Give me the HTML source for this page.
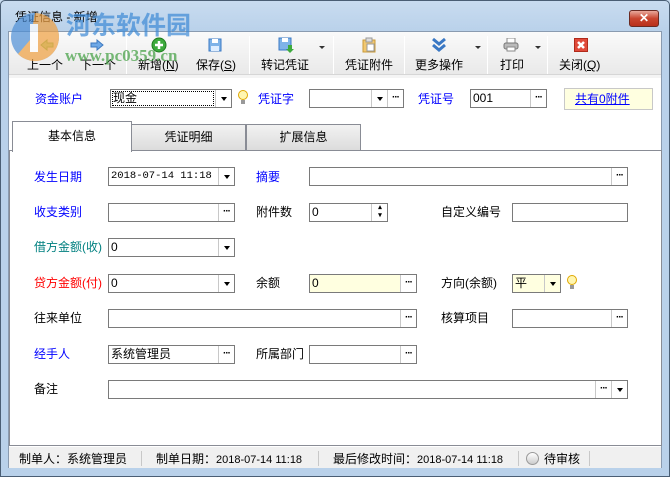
<!DOCTYPE html>
<html><head><meta charset="utf-8"><style>
*{margin:0;padding:0;box-sizing:border-box}
body{width:670px;height:477px;overflow:hidden;position:relative;background:#b9d1ea;font-family:"Liberation Sans","Noto Sans CJK SC","WenQuanYi Zen Hei",sans-serif;font-size:12px;color:#000}
.a{position:absolute}
.t{position:absolute;white-space:nowrap;line-height:14px}
.blue{color:#0000ff}
.box{position:absolute;height:19px;border:1px solid #7a7a7a;background:#fff;font-size:12px;line-height:17px;padding-left:2px;white-space:nowrap}
.btn{position:absolute;top:0;bottom:0;width:16px;border-left:1px solid #c8c8c8;background:#fff;text-align:center;font-size:10px;line-height:15px;font-weight:bold;letter-spacing:-1px}
.arr{position:absolute;top:0;bottom:0;width:16px;border-left:1px solid #c8c8c8;background:#fff}
.arr:after{content:"";position:absolute;left:5px;top:7px;border-left:3px solid transparent;border-right:3px solid transparent;border-top:4px solid #000}
.tb{position:absolute;top:56px;font-size:12px;white-space:nowrap;color:#000}
.sep{position:absolute;top:36px;width:1px;height:38px;background:#cfcfcf;border-right:1px solid #fff}
.dd{position:absolute;top:46px;border-left:3px solid transparent;border-right:3px solid transparent;border-top:3px solid #333}
</style></head><body>
<div class="a" style="left:0;top:0;width:670px;height:32px;background:linear-gradient(#c9dcf0,#b9d1ea)"></div>
<div class="a" style="left:0;top:0;width:670px;height:477px;border:1px solid #4a5e74;border-radius:5px 5px 0 0"></div>
<div class="t" style="left:15px;top:10px;font-size:12px">凭证信息 - 新增</div>
<div class="a" style="left:629px;top:10px;width:30px;height:17px;border:1px solid #6b2a22;border-radius:3px;background:linear-gradient(#e9a99c,#c9452f 50%,#b9301c);color:#fff;font-weight:bold;text-align:center;line-height:15px;font-size:12px">✕</div>
<div class="a" style="left:8px;top:31px;width:654px;height:437px;background:#fff;border:1px solid #8a9bb0"></div>
<div class="a" style="left:9px;top:32px;width:652px;height:43px;background:linear-gradient(#fafafa,#e9e9e9);border-bottom:1px solid #d6d6d6"></div>
<div class="a" style="left:9px;top:75px;width:652px;height:3px;background:#f4f4f4"></div>
<div class="tb" style="left:27px">上一个</div>
<div class="tb" style="left:80px">下一个</div>
<div class="tb" style="left:138px">新增(<u>N</u>)</div>
<div class="tb" style="left:196px">保存(<u>S</u>)</div>
<div class="tb" style="left:261px">转记凭证</div>
<div class="tb" style="left:345px">凭证附件</div>
<div class="tb" style="left:415px">更多操作</div>
<div class="tb" style="left:500px">打印</div>
<div class="tb" style="left:559px">关闭(<u>Q</u>)</div>
<div class="sep" style="left:126px"></div><div class="sep" style="left:249px"></div><div class="sep" style="left:333px"></div><div class="sep" style="left:404px"></div><div class="sep" style="left:487px"></div><div class="sep" style="left:547px"></div>
<div class="dd" style="left:319px"></div><div class="dd" style="left:475px"></div><div class="dd" style="left:535px"></div>
<svg class="a" style="left:40px;top:39px" width="14" height="12"><path d="M1 6 L7 1 V4 H13 V8 H7 V11Z" fill="#b6e0a0" stroke="#7fbf6a"/></svg>
<svg class="a" style="left:90px;top:39px" width="14" height="12"><path d="M13 6 L7 1 V4 H1 V8 H7 V11Z" fill="#6ea8e6" stroke="#3c78c0"/></svg>
<svg class="a" style="left:151px;top:37px" width="16" height="16"><circle cx="8" cy="8" r="7" fill="#3daa3d" stroke="#1f7a1f"/><path d="M8 4V12M4 8H12" stroke="#fff" stroke-width="2.5"/></svg>
<svg class="a" style="left:208px;top:38px" width="14" height="14"><rect x="1" y="1" width="12" height="12" fill="#7fb3e8" stroke="#3a78c4"/><rect x="4" y="1" width="6" height="4" fill="#fff"/><rect x="3" y="8" width="8" height="5" fill="#dfeeff"/></svg>
<svg class="a" style="left:278px;top:37px" width="16" height="16"><rect x="1" y="1" width="12" height="12" fill="#7fb3e8" stroke="#3a78c4"/><rect x="4" y="1" width="6" height="4" fill="#fff"/><path d="M10 8V12H8L12 16L16 12H14V8Z" fill="#3daa3d"/></svg>
<svg class="a" style="left:362px;top:37px" width="14" height="16"><rect x="1" y="3" width="12" height="12" fill="#f2c870" stroke="#c99a3a"/><rect x="4" y="1" width="6" height="4" fill="#ddd" stroke="#999"/><rect x="5" y="7" width="7" height="7" fill="#fff" stroke="#999"/></svg>
<svg class="a" style="left:432px;top:37px" width="14" height="16"><path d="M1 2L7 7L13 2M1 8L7 13L13 8" stroke="#3a78c4" stroke-width="3" fill="none"/></svg>
<svg class="a" style="left:503px;top:38px" width="16" height="14"><rect x="4" y="0" width="8" height="5" fill="#fff" stroke="#888"/><rect x="1" y="5" width="14" height="6" rx="2" fill="#bbb" stroke="#777"/><rect x="4" y="9" width="8" height="4" fill="#fff" stroke="#888"/></svg>
<svg class="a" style="left:574px;top:38px" width="14" height="14"><rect x="0.5" y="0.5" width="13" height="13" fill="#e04a3a" stroke="#b02a1a"/><path d="M4 4L10 10M10 4L4 10" stroke="#fff" stroke-width="2.5"/></svg>
<!-- watermark -->
<svg class="a" style="left:8px;top:10px;opacity:.7" width="55" height="55"><circle cx="27" cy="27" r="24" fill="#4e8fd6"/><path d="M27 3A24 24 0 0 1 51 27A24 24 0 0 1 10 44L22 30Z" fill="#f0a040"/><path d="M22 14H30V42H22Z" fill="#fff"/></svg>
<div class="t" style="left:66px;top:12px;font-size:25px;line-height:28px;color:#3d8ad6;font-weight:bold;opacity:.7">河东软件园</div>
<div class="t" style="left:65px;top:47px;font-size:17px;line-height:18px;color:#4aa34a;font-weight:bold;font-family:'Liberation Serif',serif;opacity:.75">www.pc0359.cn</div>
<div class="t blue" style="left:35px;top:92px">资金账户</div>
<div class="box" style="left:110px;top:89px;width:122px">现金<div class="arr" style="right:0"></div></div>
<div class="a" style="left:112px;top:91px;width:102px;height:15px;border:1px dotted #000"></div>
<svg class="a" style="left:238px;top:89px" width="10" height="18"><circle cx="5" cy="6" r="4.5" fill="#fff6b0" stroke="#e0a800"/><rect x="3" y="11" width="4" height="4" fill="#999"/></svg>
<div class="t blue" style="left:258px;top:92px">凭证字</div>
<div class="box" style="left:309px;top:89px;width:95px"><div class="arr" style="right:16px"></div><div class="btn" style="right:0">···</div></div>
<div class="t blue" style="left:418px;top:92px">凭证号</div>
<div class="box" style="left:470px;top:89px;width:77px">001<div class="btn" style="right:0">···</div></div>
<div class="a" style="left:564px;top:88px;width:89px;height:22px;background:#ffffe0;border:1px solid #c8c8c8"></div>
<div class="t blue" style="left:575px;top:92px;text-decoration:underline">共有0附件</div>
<div class="a" style="left:9px;top:150px;width:653px;height:296px;border:1px solid #898c95;background:#fff"></div>
<div class="a" style="left:131px;top:124px;width:115px;height:27px;border:1px solid #898c95;background:linear-gradient(#f2f2f2,#dcdcdc);text-align:center;line-height:24px">凭证明细</div>
<div class="a" style="left:246px;top:124px;width:115px;height:27px;border:1px solid #898c95;background:linear-gradient(#f2f2f2,#dcdcdc);text-align:center;line-height:24px">扩展信息</div>
<div class="a" style="left:12px;top:121px;width:120px;height:31px;border:1px solid #898c95;border-bottom:none;background:#fff;text-align:center;line-height:28px">基本信息</div>
<div class="t blue" style="left:34px;top:170px">发生日期</div>
<div class="box" style="left:108px;top:167px;width:127px;font-family:'Liberation Mono',monospace;font-size:10.5px">2018-07-14 11:18<div class="arr" style="right:0"></div></div>
<div class="t blue" style="left:256px;top:170px">摘要</div>
<div class="box" style="left:309px;top:167px;width:319px"><div class="btn" style="right:0">···</div></div>
<div class="t blue" style="left:34px;top:205px">收支类别</div>
<div class="box" style="left:108px;top:203px;width:127px"><div class="btn" style="right:0">···</div></div>
<div class="t" style="left:256px;top:205px">附件数</div>
<div class="box" style="left:309px;top:203px;width:79px">0<div class="btn" style="right:0;font-size:7px;line-height:8px">▴<br>▾</div></div>
<div class="t" style="left:441px;top:205px">自定义编号</div>
<div class="box" style="left:512px;top:203px;width:116px"></div>
<div class="t" style="left:34px;top:240px;color:#008080">借方金额(收)</div>
<div class="box" style="left:108px;top:238px;width:127px">0<div class="arr" style="right:0"></div></div>
<div class="t" style="left:34px;top:276px;color:#ff0000">贷方金额(付)</div>
<div class="box" style="left:108px;top:274px;width:127px">0<div class="arr" style="right:0"></div></div>
<div class="t" style="left:256px;top:276px">余额</div>
<div class="box" style="left:309px;top:274px;width:108px;background:#ffffe0">0<div class="btn" style="right:0">···</div></div>
<div class="t" style="left:441px;top:276px">方向(余额)</div>
<div class="box" style="left:512px;top:274px;width:49px;background:#ffffe0">平<div class="arr" style="right:0;background:#ffffe0"></div></div>
<svg class="a" style="left:567px;top:274px" width="10" height="18"><circle cx="5" cy="6" r="4.5" fill="#fff6b0" stroke="#e0a800"/><rect x="3" y="11" width="4" height="4" fill="#999"/></svg>
<div class="t" style="left:34px;top:311px">往来单位</div>
<div class="box" style="left:108px;top:309px;width:309px"><div class="btn" style="right:0">···</div></div>
<div class="t" style="left:441px;top:311px">核算项目</div>
<div class="box" style="left:512px;top:309px;width:116px"><div class="btn" style="right:0">···</div></div>
<div class="t blue" style="left:34px;top:347px">经手人</div>
<div class="box" style="left:108px;top:345px;width:127px">系统管理员<div class="btn" style="right:0">···</div></div>
<div class="t" style="left:256px;top:347px">所属部门</div>
<div class="box" style="left:309px;top:345px;width:108px"><div class="btn" style="right:0">···</div></div>
<div class="t" style="left:34px;top:382px">备注</div>
<div class="box" style="left:108px;top:380px;width:520px"><div class="btn" style="right:16px">···</div><div class="arr" style="right:0"></div></div>
<div class="a" style="left:9px;top:447px;width:652px;height:21px;background:#f0f0f0"></div>
<div class="t" style="left:19px;top:452px">制单人：系统管理员</div>
<div class="a" style="left:141px;top:451px;width:1px;height:15px;background:#c8c8c8"></div>
<div class="t" style="left:156px;top:452px">制单日期：<span style="font-size:11px">2018-07-14 11:18</span></div>
<div class="a" style="left:318px;top:451px;width:1px;height:15px;background:#c8c8c8"></div>
<div class="t" style="left:333px;top:452px">最后修改时间：<span style="font-size:11px">2018-07-14 11:18</span></div>
<div class="a" style="left:518px;top:451px;width:1px;height:15px;background:#c8c8c8"></div>
<div class="a" style="left:526px;top:452px;width:13px;height:13px;border-radius:50%;border:1px solid #999;background:linear-gradient(#fff,#ccc)"></div>
<div class="t" style="left:544px;top:452px">待审核</div>
<div class="a" style="left:589px;top:451px;width:1px;height:15px;background:#c8c8c8"></div>
<div class="a" style="left:0;top:476px;width:670px;height:1px;background:#4a5e74"></div>
</body></html>
